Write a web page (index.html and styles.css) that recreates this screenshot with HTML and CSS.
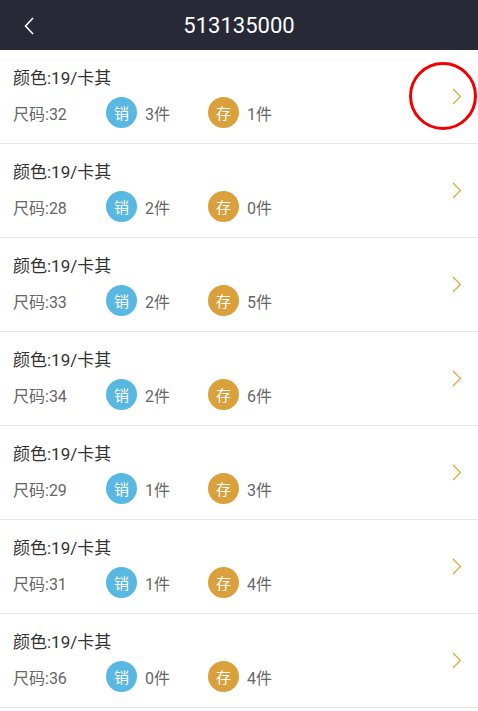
FILE: index.html
```html
<!DOCTYPE html>
<html lang="zh">
<head>
  <meta charset="UTF-8">
  <meta name="viewport" content="width=device-width, initial-scale=1">
  <title>513135000</title>
  <link rel="stylesheet" href="styles.css">
</head>
<body>

  <!-- Barre de titre -->
  <div class="topbar">
    <a href="#" class="back">
      <svg width="10" height="18" viewBox="0 0 10 18"><path d="M9 1 L1.5 9 L9 17" fill="none" stroke="#fff" stroke-width="1.6"/></svg>
    </a>
    <h1>513135000</h1>
  </div>

  <!-- Liste des tailles -->
  <ul class="list">
    <li class="item">
      <div class="info">
        <div class="color">颜色:19/卡其</div>
        <div class="stats">
          <span class="size">尺码:32</span>
          <span class="stat"><i class="badge sold">销</i>3件</span>
          <span class="stat"><i class="badge stock">存</i>1件</span>
        </div>
      </div>
      <svg class="arrow" width="10" height="17" viewBox="0 0 10 17"><path d="M1 1 L8.5 8.5 L1 16" fill="none" stroke="#e6a338" stroke-width="1.2"/></svg>
      <span class="mark"></span>
    </li>
    <li class="item">
      <div class="info">
        <div class="color">颜色:19/卡其</div>
        <div class="stats">
          <span class="size">尺码:28</span>
          <span class="stat"><i class="badge sold">销</i>2件</span>
          <span class="stat"><i class="badge stock">存</i>0件</span>
        </div>
      </div>
      <svg class="arrow" width="10" height="17" viewBox="0 0 10 17"><path d="M1 1 L8.5 8.5 L1 16" fill="none" stroke="#e6a338" stroke-width="1.2"/></svg>
    </li>
    <li class="item">
      <div class="info">
        <div class="color">颜色:19/卡其</div>
        <div class="stats">
          <span class="size">尺码:33</span>
          <span class="stat"><i class="badge sold">销</i>2件</span>
          <span class="stat"><i class="badge stock">存</i>5件</span>
        </div>
      </div>
      <svg class="arrow" width="10" height="17" viewBox="0 0 10 17"><path d="M1 1 L8.5 8.5 L1 16" fill="none" stroke="#e6a338" stroke-width="1.2"/></svg>
    </li>
    <li class="item">
      <div class="info">
        <div class="color">颜色:19/卡其</div>
        <div class="stats">
          <span class="size">尺码:34</span>
          <span class="stat"><i class="badge sold">销</i>2件</span>
          <span class="stat"><i class="badge stock">存</i>6件</span>
        </div>
      </div>
      <svg class="arrow" width="10" height="17" viewBox="0 0 10 17"><path d="M1 1 L8.5 8.5 L1 16" fill="none" stroke="#e6a338" stroke-width="1.2"/></svg>
    </li>
    <li class="item">
      <div class="info">
        <div class="color">颜色:19/卡其</div>
        <div class="stats">
          <span class="size">尺码:29</span>
          <span class="stat"><i class="badge sold">销</i>1件</span>
          <span class="stat"><i class="badge stock">存</i>3件</span>
        </div>
      </div>
      <svg class="arrow" width="10" height="17" viewBox="0 0 10 17"><path d="M1 1 L8.5 8.5 L1 16" fill="none" stroke="#e6a338" stroke-width="1.2"/></svg>
    </li>
    <li class="item">
      <div class="info">
        <div class="color">颜色:19/卡其</div>
        <div class="stats">
          <span class="size">尺码:31</span>
          <span class="stat"><i class="badge sold">销</i>1件</span>
          <span class="stat"><i class="badge stock">存</i>4件</span>
        </div>
      </div>
      <svg class="arrow" width="10" height="17" viewBox="0 0 10 17"><path d="M1 1 L8.5 8.5 L1 16" fill="none" stroke="#e6a338" stroke-width="1.2"/></svg>
    </li>
    <li class="item">
      <div class="info">
        <div class="color">颜色:19/卡其</div>
        <div class="stats">
          <span class="size">尺码:36</span>
          <span class="stat"><i class="badge sold">销</i>0件</span>
          <span class="stat"><i class="badge stock">存</i>4件</span>
        </div>
      </div>
      <svg class="arrow" width="10" height="17" viewBox="0 0 10 17"><path d="M1 1 L8.5 8.5 L1 16" fill="none" stroke="#e6a338" stroke-width="1.2"/></svg>
    </li>
  </ul>

</body>
</html>
```

FILE: styles.css
```css
body {
  margin: 0;
  padding: 0;
  font-family: Roboto, "Noto Sans CJK SC", sans-serif;
  background: #fff;
}

.topbar {
  height: 50px;
  background-color: #272936;
  display: flex;
  align-items: center;
  justify-content: center;
  position: relative;
}

.topbar h1 {
  margin: 0;
  color: #fff;
  font-size: 22px;
  font-weight: 400;
}

.back {
  position: absolute;
  left: 24px;
  top: 17px;
  display: flex;
}

.list {
  list-style: none;
  margin: 0;
  padding: 0;
}

.item {
  display: flex;
  align-items: center;
  padding: 18px 16px 15px 13px;
  border-bottom: 1px solid #e6e6e6;
  position: relative;
}

.info {
  flex: 1;
}

.color {
  font-size: 17px;
  line-height: 20px;
  color: #333;
}

.stats {
  display: flex;
  align-items: center;
  margin-top: 9px;
  font-size: 16px;
  color: #666;
}

.size {
  width: 93px;
}

.stat {
  display: flex;
  align-items: center;
  width: 102px;
}

.badge {
  width: 31px;
  height: 31px;
  border-radius: 50%;
  color: #fff;
  font-style: normal;
  font-size: 15px;
  display: flex;
  align-items: center;
  justify-content: center;
  margin-right: 8px;
}

.sold {
  background-color: #58b8e2;
}

.stock {
  background-color: #d9a03c;
}

.arrow {
  margin-top: -4px;
}

.mark {
  position: absolute;
  left: 409px;
  top: 12px;
  width: 62px;
  height: 62px;
  border: 3px solid #f20000;
  border-radius: 50%;
}
```
